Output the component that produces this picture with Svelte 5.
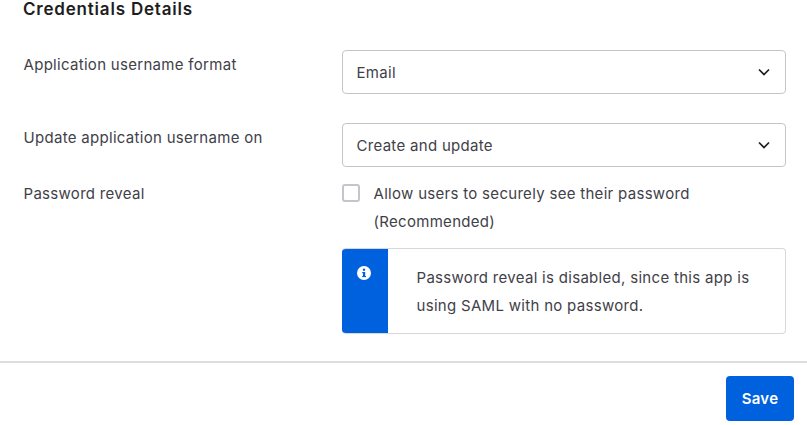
<script>
  const fields = [
    { label: 'Application username format', value: 'Email' },
    { label: 'Update application username on', value: 'Create and update' }
  ];
</script>

<div class="page">
  <h2>Credentials Details</h2>

  <div class="form">
    {#each fields as field}
      <div class="row">
        <div class="label">{field.label}</div>
        <div class="select">
          <span>{field.value}</span>
          <svg width="14" height="14" viewBox="0 0 14 14" fill="none">
            <path d="M2 4.5l5 5 5-5" stroke="#1d1d21" stroke-width="1.7" />
          </svg>
        </div>
      </div>
    {/each}

    <div class="row reveal">
      <div class="label">Password reveal</div>
      <div class="control">
        <label class="check">
          <span class="box"></span>
          <span>Allow users to securely see their password (Recommended)</span>
        </label>
        <div class="notice">
          <div class="notice-side">
            <svg width="16" height="16" viewBox="0 0 16 16">
              <circle cx="8" cy="8" r="7" fill="#fff" />
              <rect x="7" y="7" width="2.2" height="5" fill="#0061df" />
              <rect x="6.2" y="7" width="2" height="1.2" fill="#0061df" />
              <rect x="6.2" y="11" width="3.8" height="1.1" fill="#0061df" />
              <circle cx="8" cy="4.8" r="1.2" fill="#0061df" />
            </svg>
          </div>
          <p>Password reveal is disabled, since this app is using SAML with no password.</p>
        </div>
      </div>
    </div>
  </div>

  <div class="footer">
    <button>Save</button>
  </div>
</div>

<style>
  :global(body) {
    margin: 0;
    background: #fff;
    color: #3f4148;
    font-family: Inter, 'Noto Sans', sans-serif;
    font-size: 15px;
    letter-spacing: 0.3px;
    overflow: hidden;
  }

  .page {
    width: 807px;
    height: 425px;
  }

  h2 {
    margin: 0;
    padding-left: 23px;
    font-size: 17px;
    line-height: 18px;
    font-weight: 600;
    letter-spacing: 0.8px;
    color: #1d1d21;
  }

  .form {
    padding: 32px 21px 0 23.5px;
  }

  .row {
    display: grid;
    grid-template-columns: 318px 444.5px;
    margin-bottom: 29px;
  }

  .row.reveal {
    margin-top: -17px;
    margin-bottom: 0;
  }

  .label {
    padding-top: 1px;
    line-height: 28px;
  }

  .select {
    height: 44px;
    box-sizing: border-box;
    border: 1px solid #c4c5ca;
    border-radius: 4px;
    padding: 0 14px;
    display: flex;
    align-items: center;
    justify-content: space-between;
  }

  .check {
    display: grid;
    grid-template-columns: 18px 1fr;
    column-gap: 14px;
    padding: 1px 60px 0 0;
    line-height: 28px;
  }

  .box {
    width: 18px;
    height: 18px;
    box-sizing: border-box;
    margin-top: 4px;
    border: 2px solid #c4c5ca;
    border-radius: 3px;
  }

  .notice {
    display: flex;
    height: 86px;
    margin-top: 12px;
    box-sizing: border-box;
    border: 1px solid #d7d8dc;
    border-left: 0;
    border-radius: 4px;
    overflow: hidden;
  }

  .notice-side {
    width: 46.5px;
    margin: -1px 0;
    background: #0061df;
    display: flex;
    justify-content: center;
    padding: 17px 1px 0 0;
    box-sizing: border-box;
  }

  .notice p {
    margin: 0;
    padding: 14.5px 30px 0 28.5px;
    line-height: 28px;
    flex: 1;
  }

  .footer {
    margin-top: 27px;
    border-top: 2px solid #dcdde0;
    display: flex;
    justify-content: flex-end;
    padding: 13px 13px 0 0;
  }

  button {
    width: 68px;
    height: 45px;
    border: 0;
    border-radius: 4px;
    background: #0061df;
    color: #fff;
    font: 600 15px Inter, 'Noto Sans', sans-serif;
    letter-spacing: 0.3px;
  }
</style>
